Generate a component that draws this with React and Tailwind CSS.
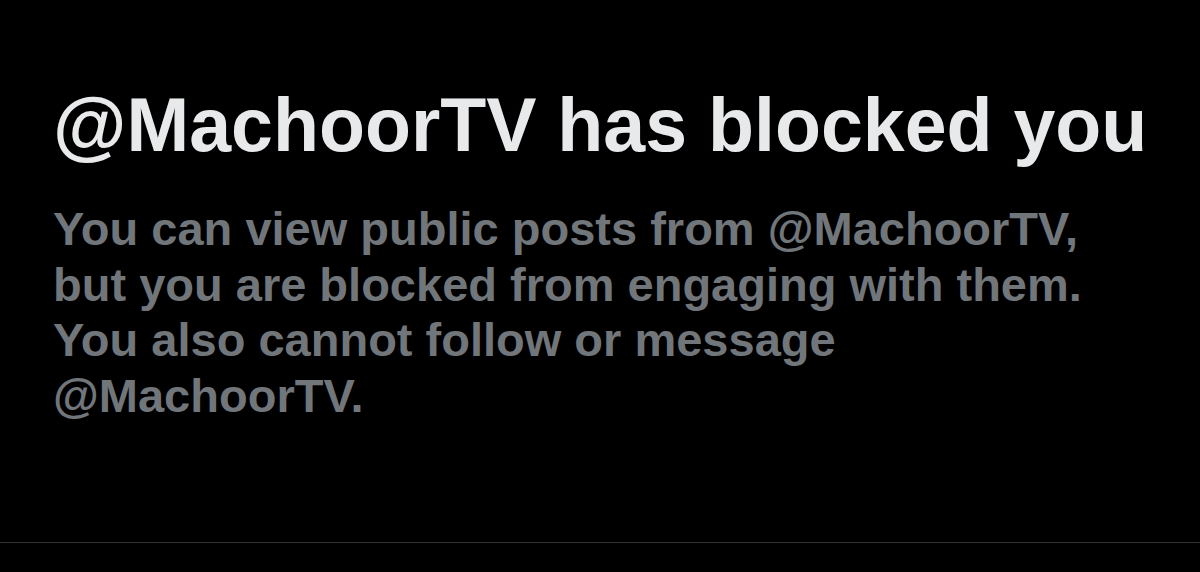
import React from 'react';

const App = () => {
  const handle = '@MachoorTV';

  return (
    <div className="flex flex-col h-[572px] w-[1200px] bg-black overflow-hidden" style={{ fontFamily: '"Liberation Sans", Arial, sans-serif' }}>
      <main className="flex-1 pl-[53px] pt-[80px]">
        <h1 className="text-[75.3px] leading-[90px] font-bold text-[#e7e9ea] whitespace-nowrap">
          {handle} has blocked you
        </h1>
        <p className="mt-[31px] text-[47px] leading-[55.5px] font-bold text-[#71767b] whitespace-nowrap">
          You can view public posts from {handle},
          <br />
          but you are blocked from engaging with them.
          <br />
          You also cannot follow or message
          <br />
          {handle}.
        </p>
      </main>
      {/* bottom divider */}
      <div className="h-[30px] border-t border-[#2f3336]" />
    </div>
  );
};

export default App;
